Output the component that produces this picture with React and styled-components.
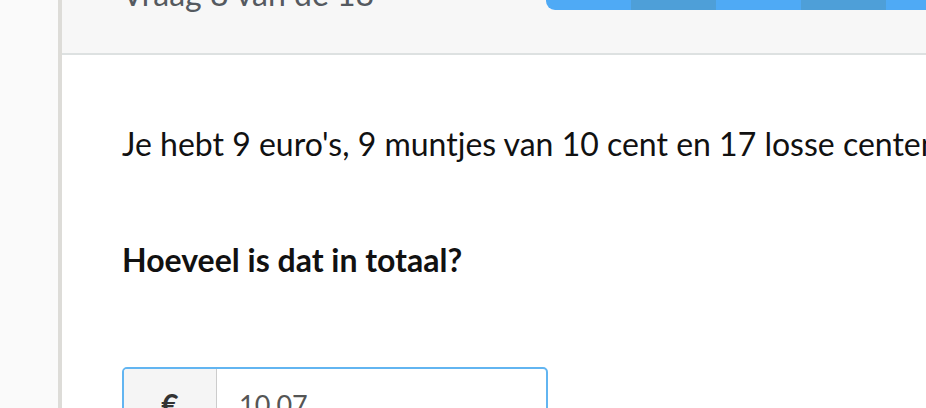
import React from 'react'
import styled, { createGlobalStyle } from 'styled-components'

const GlobalStyle = createGlobalStyle`
  html, body {
    margin: 0;
    padding: 0;
    overflow: hidden;
    background: #fafafa;
  }
  body {
    font-family: 'Lato', 'Noto Sans', sans-serif;
  }
`

const Page = styled.div`
  display: flex;
  margin-top: -30px;
  min-height: 480px;
`

const Gutter = styled.div`
  flex: 0 0 58px;
  background: #fafafa;
`

const Card = styled.div`
  flex: 0 0 1100px;
  background: #fff;
  border-left: 4px solid #dddcd8;
  display: flex;
  flex-direction: column;
`

const Header = styled.div`
  height: 85px;
  box-sizing: border-box;
  background: #f7f7f7;
  border-bottom: 2px solid #dde1e1;
  display: flex;
  align-items: flex-start;
  padding: 5px 0 0 60px;
`

const Title = styled.div`
  flex: 0 0 424px;
  font-size: 32px;
  line-height: 38px;
  color: #555a60;
`

const Progress = styled.div`
  display: flex;
  margin-top: 15px;
  height: 20px;
  border-radius: 0 0 0 9px;
  overflow: hidden;
`

const Segment = styled.div`
  flex: 0 0 85px;
  background: ${p => (p.$dark ? '#4e9fd8' : '#4faaf5')};
`

const Body = styled.div`
  padding: 67px 60px 0 60px;
`

const Question = styled.p`
  margin: 0;
  font-size: 32px;
  line-height: 44px;
  color: #111;
  white-space: nowrap;
`

const Ask = styled(Question)`
  font-weight: 700;
  margin-top: 72px;
`

const InputGroup = styled.div`
  margin-top: 85px;
  width: 426px;
  height: 74px;
  box-sizing: border-box;
  border: 2px solid #62b5f1;
  border-radius: 5px;
  display: flex;
  overflow: hidden;
`

const Prefix = styled.div`
  flex: 0 0 92px;
  background: #f5f5f5;
  border-right: 1px solid #cccccc;
  display: flex;
  align-items: center;
  justify-content: center;
  font-size: 30px;
  font-weight: 700;
  color: #333;
`

const Value = styled.div`
  flex: 1;
  display: flex;
  align-items: center;
  padding-left: 22px;
  font-size: 27px;
  color: #555;
`

export default function App() {
  const segments = Array.from({ length: 18 }, (_, i) => i)
  return (
    <>
      <GlobalStyle />
      <Page>
        <Gutter />
        <Card>
          <Header>
            <Title>Vraag 8 van de 18</Title>
            <Progress>
              {segments.map(i => (
                <Segment key={i} $dark={i % 2 === 1} />
              ))}
            </Progress>
          </Header>
          <Body>
            <Question>Je hebt 9 euro's, 9 muntjes van 10 cent en 17 losse centen.</Question>
            <Ask>Hoeveel is dat in totaal?</Ask>
            <InputGroup>
              <Prefix>€</Prefix>
              <Value>10,07</Value>
            </InputGroup>
          </Body>
        </Card>
      </Page>
    </>
  )
}
